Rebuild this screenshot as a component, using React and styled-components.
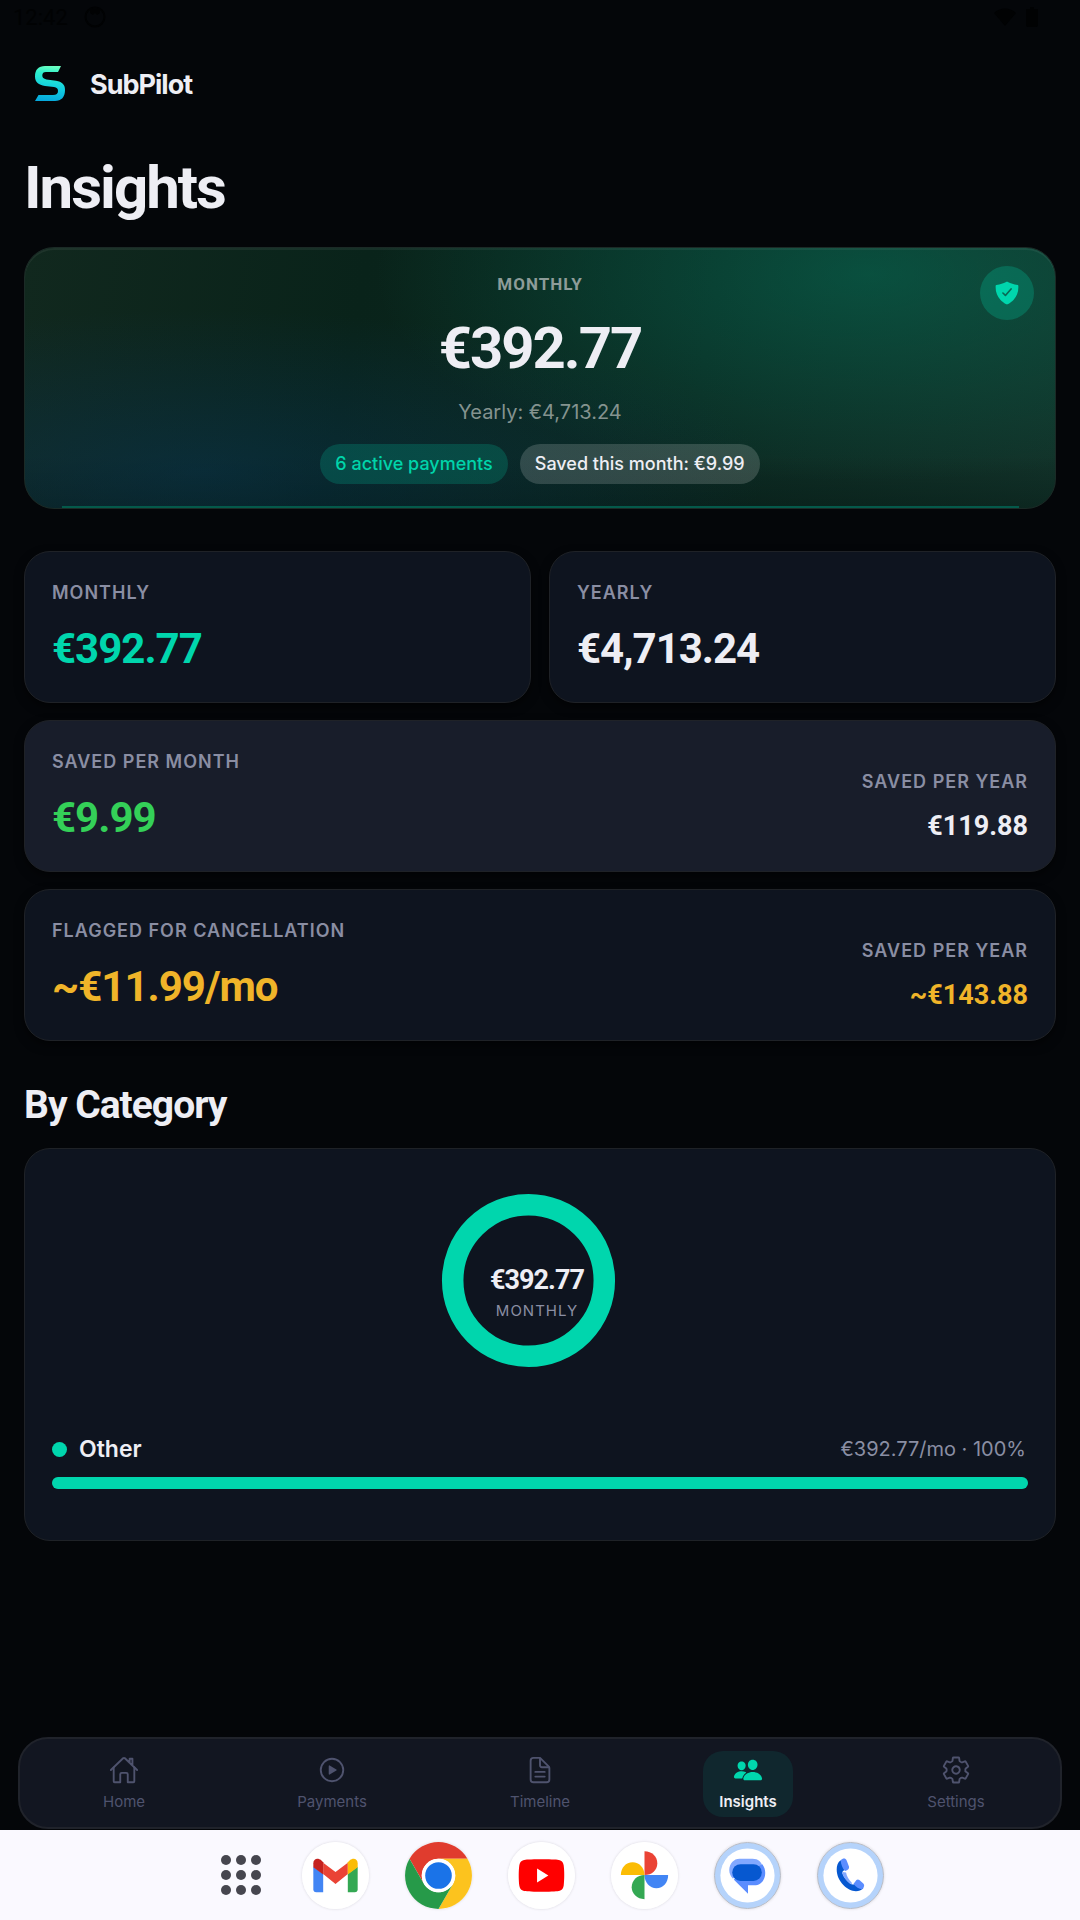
import React from 'react';
import styled, { createGlobalStyle } from 'styled-components';
import {
    IoHomeOutline,
    IoPlayCircleOutline,
    IoDocumentTextOutline,
    IoPeople,
    IoSettingsOutline,
    IoShieldCheckmark,
} from 'react-icons/io5';

const GlobalStyle = createGlobalStyle`
    * {
        box-sizing: border-box;
    }

    body {
        margin: 0;
        background: #040609;
        color: #eeeef4;
        font-family: Inter, sans-serif;
    }

    h1, h2, p {
        margin: 0;
    }

    button {
        border: none;
        padding: 0;
        background: none;
        font-family: inherit;
        cursor: pointer;
    }
`;

// Styled components
const Screen = styled.div`
    display: flex;
    flex-direction: column;
    min-height: 100vh;
`;

const StatusBar = styled.div`
    display: flex;
    align-items: center;
    justify-content: space-between;
    height: 34px;
    padding: 0 42px 0 13px;
    color: #010203;
    font-family: Roboto, sans-serif;
    font-size: 22px;
`;

const StatusGroup = styled.div`
    display: flex;
    align-items: center;
    gap: ${(props) => props.$gap}px;
`;

const Header = styled.header`
    display: flex;
    align-items: center;
    gap: 14px;
    height: 100px;
    padding: 0 24px;
`;

const Brand = styled.span`
    font-size: 27px;
    font-weight: 700;
    letter-spacing: -1px;
`;

const Content = styled.main`
    padding: 18px 24px 40px;
`;

const Title = styled.h1`
    margin-bottom: 23px;
    font-family: Roboto, sans-serif;
    font-size: 60px;
    font-weight: 700;
    line-height: 72px;
    letter-spacing: -2px;
`;

const Hero = styled.section`
    position: relative;
    display: flex;
    flex-direction: column;
    align-items: center;
    padding: 25px 24px 24px;
    border: 1px solid #1b2a26;
    border-radius: 30px;
    overflow: hidden;
    background:
        radial-gradient(ellipse 48% 80% at 82% 10%, rgba(0, 140, 108, 0.36), transparent),
        radial-gradient(ellipse 55% 62% at 17% 86%, rgba(8, 56, 96, 0.42), transparent),
        linear-gradient(180deg, transparent 80%, rgba(0, 12, 10, 0.3) 100%),
        linear-gradient(100deg, #11281e 0%, #09231a 32%, #0c2a22 65%, #12332a 100%);
    box-shadow: inset 0 2px 0 rgba(255, 255, 255, 0.06);
`;

const HeroLabel = styled.p`
    color: #8d9c99;
    font-family: Roboto, sans-serif;
    font-size: 17px;
    font-weight: 700;
    line-height: 22px;
    letter-spacing: 1px;
`;

const HeroValue = styled.p`
    margin-top: 21px;
    font-family: Roboto, sans-serif;
    font-size: 58px;
    font-weight: 700;
    line-height: 64px;
    letter-spacing: -2px;
`;

const HeroNote = styled.p`
    margin-top: 19px;
    color: #84938f;
    font-size: 20px;
    line-height: 26px;
`;

const Pills = styled.div`
    display: flex;
    gap: 12px;
    margin-top: 19px;
`;

const Pill = styled.span`
    padding: 0 15px;
    border-radius: 20px;
    background: ${(props) => (props.$accent ? 'rgba(0, 212, 170, 0.2)' : 'rgba(255, 255, 255, 0.16)')};
    color: ${(props) => (props.$accent ? '#00d4aa' : '#eeeef4')};
    font-size: 18px;
    font-weight: 500;
    line-height: 40px;
`;

const Badge = styled.div`
    position: absolute;
    top: 18px;
    right: 21px;
    display: grid;
    place-items: center;
    width: 54px;
    height: 54px;
    border-radius: 50%;
    background: rgba(0, 212, 170, 0.24);
    color: #00d6ad;
`;

const HeroLine = styled.div`
    position: absolute;
    left: 37px;
    right: 36px;
    bottom: 0;
    height: 2px;
    background: #045a4b;
`;

const Stats = styled.section`
    display: grid;
    grid-template-columns: 1fr 1fr;
    gap: 17px 18px;
    margin-top: 42px;
`;

const Card = styled.div`
    display: flex;
    align-items: flex-end;
    justify-content: space-between;
    grid-column: ${(props) => (props.$wide ? '1 / -1' : 'auto')};
    padding: 28px 27px;
    border: 1px solid #1f2227;
    border-radius: 26px;
    background: ${(props) => (props.$raised ? '#181d2a' : '#0e141f')};
    box-shadow: 0 4px 10px rgba(0, 0, 0, 0.5);
`;

const Side = styled.div`
    text-align: right;
`;

const Label = styled.p`
    color: #8a8ea3;
    font-size: 18px;
    font-weight: 600;
    line-height: 26px;
    letter-spacing: 1px;
`;

const Value = styled.p`
    margin-top: 17px;
    color: ${(props) => props.$color || '#eeeef4'};
    font-family: Roboto, sans-serif;
    font-size: 42px;
    font-weight: 700;
    line-height: 51px;
    letter-spacing: -1px;
`;

const SideValue = styled.p`
    margin-top: 14px;
    color: ${(props) => props.$color || '#eeeef4'};
    font-family: Roboto, sans-serif;
    font-size: 27px;
    font-weight: 700;
    line-height: 34px;
`;

const Subtitle = styled.h2`
    margin: 40px 0 19px;
    font-family: Roboto, sans-serif;
    font-size: 39px;
    font-weight: 700;
    line-height: 48px;
    letter-spacing: -1px;
`;

const CategoryCard = styled.section`
    padding: 28px 27px;
    border: 1px solid #1f2227;
    border-radius: 26px;
    background: #0e141f;
`;

const Chart = styled.div`
    position: relative;
    width: 208px;
    height: 208px;
    margin: 0 auto 50px;
`;

const ChartText = styled.div`
    position: absolute;
    inset: 0;
    display: flex;
    flex-direction: column;
    align-items: center;
    justify-content: center;
    padding: 26px 6px 0 0;
`;

const ChartValue = styled.span`
    font-family: Roboto, sans-serif;
    font-size: 27px;
    font-weight: 700;
    line-height: 34px;
    letter-spacing: -1px;
`;

const ChartLabel = styled.span`
    color: #8a8ea3;
    font-size: 15px;
    line-height: 28px;
    letter-spacing: 1px;
`;

const CategoryRow = styled.div`
    display: flex;
    align-items: center;
    gap: 12px;
    margin-bottom: 14px;
    line-height: 28px;
`;

const Dot = styled.span`
    width: 15px;
    height: 15px;
    border-radius: 50%;
    background: #00d6ad;
`;

const CategoryName = styled.span`
    font-size: 23px;
    font-weight: 600;
`;

const CategoryAmount = styled.span`
    margin-left: auto;
    padding-right: 2px;
    color: #8a8ea3;
    font-size: 20px;
`;

const Track = styled.div`
    height: 12px;
    margin-bottom: 23px;
    border-radius: 6px;
    background: #1b2230;
`;

const Fill = styled.div`
    height: 100%;
    border-radius: 6px;
    background: #00d6ad;
`;

const TabBar = styled.nav`
    display: grid;
    grid-template-columns: repeat(5, 1fr);
    justify-items: center;
    margin: auto 18px 1px;
    padding: 12px 0 10px;
    border: 2px solid #20232b;
    border-radius: 30px;
    background: #121621;
`;

const Tab = styled.button`
    display: flex;
    flex-direction: column;
    align-items: center;
    gap: 5px;
    height: 66px;
    padding: 4px 16px 0;
    border-radius: 20px;
    background: ${(props) => (props.$active ? '#10272e' : 'transparent')};
    color: ${(props) => (props.$active ? '#00d6ad' : '#4f536e')};

    span {
        color: ${(props) => (props.$active ? '#eeeef4' : 'inherit')};
        font-size: 15px;
        font-weight: ${(props) => (props.$active ? 600 : 400)};
        line-height: 24px;
    }
`;

const Dock = styled.footer`
    display: flex;
    align-items: center;
    justify-content: center;
    gap: 36px;
    height: 90px;
    padding-left: 19px;
    background: #faf9ff;
`;

const DockButton = styled.button`
    display: flex;
    border-radius: 50%;
    box-shadow: ${(props) => (props.$plain ? 'none' : '0 0 3px rgba(0, 0, 0, 0.14)')};
`;

const tabs = [
    { name: 'Home', icon: IoHomeOutline },
    { name: 'Payments', icon: IoPlayCircleOutline },
    { name: 'Timeline', icon: IoDocumentTextOutline },
    { name: 'Insights', icon: IoPeople },
    { name: 'Settings', icon: IoSettingsOutline },
];

const categories = [{ name: 'Other', amount: '€392.77/mo', percent: 100 }];

function Logo() {
    return (
        <svg width="52" height="48" viewBox="0 0 52 48" aria-hidden="true">
            <defs>
                <linearGradient id="logo" x1="0.5" y1="0" x2="0.4" y2="1">
                    <stop offset="0" stopColor="#6dffc0" />
                    <stop offset="0.2" stopColor="#2ff0cc" />
                    <stop offset="0.6" stopColor="#12cfe0" />
                    <stop offset="1" stopColor="#06a8dc" />
                </linearGradient>
            </defs>
            <path
                fill="url(#logo)"
                d="M37 6 L34 12 H22 C19.500 12 18.300 13.200 18.300 15.300 C18.300 17.800 19.500 18.900 22.500 19.400 L32 20.800 C38 21.800 41 24.500 41 30 C41 37 37.500 41 31 41 H11 L14.500 35 H29 C32.500 35 34 33.500 34 31 C34 28.500 32.700 27.500 30 27.100 L21 25.900 C14.500 25 11 22 11 16.500 C11 9.500 14.500 6 21 6 Z"
            />
        </svg>
    );
}

function GridIcon() {
    const steps = [10, 25, 40];
    return (
        <svg width="50" height="50" viewBox="0 0 50 50">
            {steps.map((y) => steps.map((x) => <circle key={`${x}-${y}`} cx={x} cy={y} r="5" fill="#46464f" />))}
        </svg>
    );
}

function GmailIcon() {
    return (
        <svg width="67" height="67" viewBox="0 0 68 68">
            <circle cx="34" cy="34" r="34" fill="#fff" />
            <path d="M11.500 25 L21.500 32.500 V51 H14.500 C12.500 51 11.500 50 11.500 48 Z" fill="#4285f4" />
            <path d="M46.500 32.500 L56.500 25 V48 C56.500 50 55.500 51 53.500 51 H46.500 Z" fill="#34a853" />
            <path d="M21.500 21 L34 30.500 L46.500 21 V32.500 L34 42.500 L21.500 32.500 Z" fill="#ea4335" />
            <path d="M11.500 25.500 V21.500 C11.500 17 16 15.500 19.500 18.500 L21.500 20.500 V33 L11.500 25.500 Z" fill="#c5221f" />
            <path d="M56.500 25.500 V21.500 C56.500 17 52 15.500 48.500 18.500 L46.500 20.500 V33 L56.500 25.500 Z" fill="#fbbc04" />
        </svg>
    );
}

function ChromeIcon() {
    return (
        <svg width="67" height="67" viewBox="0 0 68 68">
            <circle cx="34" cy="34" r="34" fill="#fff" />
            <path d="M4.600 17 A34 34 0 0 1 63.400 17 H34 A17 17 0 0 0 19.300 42.500 Z" fill="#e03c2e" />
            <path d="M63.400 17 A34 34 0 0 1 34 68 L48.700 42.500 A17 17 0 0 0 34 17 Z" fill="#fcc31e" />
            <path d="M34 68 A34 34 0 0 1 4.600 17 L19.300 42.500 A17 17 0 0 0 48.700 42.500 Z" fill="#269a49" />
            <circle cx="34" cy="34" r="17" fill="#fff" />
            <circle cx="34" cy="34" r="13.500" fill="#1a73e8" />
        </svg>
    );
}

function YoutubeIcon() {
    return (
        <svg width="67" height="67" viewBox="0 0 68 68">
            <circle cx="34" cy="34" r="34" fill="#fff" />
            <path
                d="M34 17.500 C46 17.500 50 17.800 52.500 18.500 C55 19.200 56 20.800 56.500 23.500 C57.300 29 57.300 38 56.500 44.500 C56 47.200 55 48.800 52.500 49.500 C50 50.200 46 50.500 34 50.500 C22 50.500 18 50.200 15.500 49.500 C13 48.800 12 47.200 11.500 44.500 C10.700 38 10.700 29 11.500 23.500 C12 20.800 13 19.200 15.500 18.500 C18 17.800 22 17.500 34 17.500 Z"
                fill="#f00"
            />
            <path d="M29.500 27 L41 34 L29.500 41 Z" fill="#fff" />
        </svg>
    );
}

function PhotosIcon() {
    return (
        <svg width="67" height="67" viewBox="0 0 68 68">
            <circle cx="34" cy="34" r="34" fill="#fff" />
            <path d="M34 9.500 C41.500 9.500 47 15 47 21.500 C47 28.500 41.500 33.500 34 33.500 Z" fill="#ea4335" />
            <path d="M34 33.500 H58 C58 41 53 47 46 47 C39.500 47 34 41 34 33.500 Z" fill="#4285f4" />
            <path d="M34 33.500 V58 C26.500 58 21 52.500 21 46 C21 39 26.500 33.500 34 33.500 Z" fill="#34a853" />
            <path d="M34 33.500 H10 C10 26 15 20.500 22 20.500 C28.500 20.500 34 26 34 33.500 Z" fill="#fbbc04" />
        </svg>
    );
}

function MessagesIcon() {
    return (
        <svg width="67" height="67" viewBox="0 0 68 68">
            <circle cx="34" cy="34" r="33.500" fill="#b5d3fb" stroke="#b9bcc4" />
            <circle cx="34" cy="34" r="27.500" fill="#fff" />
            <path d="M26 17 H39 C45 17 48.500 20.500 49 25 L19 37 C16.500 34.500 15.500 31.500 15.500 28.500 C15.500 22 20 17 26 17 Z" fill="#82a8ff" />
            <path d="M49 22.500 C51 25 52 28 52 31.500 C52 39 47 44 41 44 H34.500 V52.500 L20 38 Z" fill="#5b8dff" />
            <rect x="18.500" y="22.500" width="30" height="17" rx="8.500" fill="#0658d0" />
        </svg>
    );
}

function PhoneIcon() {
    return (
        <svg width="67" height="67" viewBox="0 0 68 68">
            <circle cx="34" cy="34" r="33.500" fill="#b5d3fb" stroke="#b9bcc4" />
            <circle cx="34" cy="34" r="27.500" fill="#fff" />
            <path d="M24 18.500 C21 20.500 20 24 20 28 C20 40 31 50 39.500 50 C42.500 50 45 49 47 47 L40 41 C37.500 43.500 36 43.500 33.500 42 C29.500 39 27 35.500 25.800 32 C25.500 30.500 26 29.500 28 28.500 Z" fill="#0658d0" />
            <path d="M25.500 30.500 L29.500 31 C30 35 32.500 38.500 35.500 41.500 L35 43 C30 40 26.500 36 25.500 30.500 Z" fill="#82a8ff" />
            <path d="M24 18.500 C26.500 16 29 16.500 30 18.500 L32.500 25 C33 27 31.500 28 28.500 29.500 C26 27 24.500 23.500 24 18.500 Z" fill="#5b8dff" />
            <path d="M37 42.500 L40 38.500 C41 37.800 42 37.800 43 38.500 L47 42 C48.500 43.500 48 45.500 46 48 C42.500 47.500 39.500 45.500 37 42.500 Z" fill="#5b8dff" />
        </svg>
    );
}

const dockApps = [
    { name: 'Gmail', icon: GmailIcon },
    { name: 'Chrome', icon: ChromeIcon },
    { name: 'YouTube', icon: YoutubeIcon },
    { name: 'Photos', icon: PhotosIcon },
    { name: 'Messages', icon: MessagesIcon },
    { name: 'Phone', icon: PhoneIcon },
];

function DonutChart() {
    return (
        <Chart>
            <svg width="208" height="208" viewBox="0 0 208 208" aria-hidden="true">
                <circle cx="92.500" cy="103.500" r="75.800" fill="none" stroke="#00d6ad" strokeWidth="21.500" />
            </svg>
            <ChartText>
                <ChartValue>€392.77</ChartValue>
                <ChartLabel>MONTHLY</ChartLabel>
            </ChartText>
        </Chart>
    );
}

function App() {
    return (
        <Screen>
            <GlobalStyle />
            <StatusBar>
                <StatusGroup $gap={16}>
                    <span>12:42</span>
                    <svg width="22" height="22" viewBox="0 0 22 22">
                        <circle cx="11" cy="11" r="9.500" fill="none" stroke="currentColor" strokeWidth="2" />
                        <path d="M6 3 H16 V7 L13 9 L11 7 L9 9 L6 7 Z" fill="currentColor" />
                    </svg>
                </StatusGroup>
                <StatusGroup $gap={10}>
                    <svg width="22" height="18" viewBox="0 0 22 18">
                        <path d="M0 5 C6 -1 16 -1 22 5 L11 18 Z" fill="currentColor" />
                    </svg>
                    <svg width="12" height="20" viewBox="0 0 12 20">
                        <path d="M4 0 H8 V2 H12 V18 Q12 20 10 20 H2 Q0 20 0 18 V2 H4 Z" fill="currentColor" />
                    </svg>
                </StatusGroup>
            </StatusBar>

            <Header>
                <Logo />
                <Brand>SubPilot</Brand>
            </Header>

            <Content>
                <Title>Insights</Title>

                <Hero>
                    <HeroLabel>MONTHLY</HeroLabel>
                    <HeroValue>€392.77</HeroValue>
                    <HeroNote>Yearly: €4,713.24</HeroNote>
                    <Pills>
                        <Pill $accent>6 active payments</Pill>
                        <Pill>Saved this month: €9.99</Pill>
                    </Pills>
                    <Badge>
                        <IoShieldCheckmark size={26} />
                    </Badge>
                    <HeroLine />
                </Hero>

                <Stats>
                    <Card>
                        <div>
                            <Label>MONTHLY</Label>
                            <Value $color="#00d6ad">€392.77</Value>
                        </div>
                    </Card>
                    <Card>
                        <div>
                            <Label>YEARLY</Label>
                            <Value>€4,713.24</Value>
                        </div>
                    </Card>
                    <Card $wide $raised>
                        <div>
                            <Label>SAVED PER MONTH</Label>
                            <Value $color="#34d058">€9.99</Value>
                        </div>
                        <Side>
                            <Label>SAVED PER YEAR</Label>
                            <SideValue>€119.88</SideValue>
                        </Side>
                    </Card>
                    <Card $wide>
                        <div>
                            <Label>FLAGGED FOR CANCELLATION</Label>
                            <Value $color="#f0b429">~€11.99/mo</Value>
                        </div>
                        <Side>
                            <Label>SAVED PER YEAR</Label>
                            <SideValue $color="#f0b429">~€143.88</SideValue>
                        </Side>
                    </Card>
                </Stats>

                <Subtitle>By Category</Subtitle>
                <CategoryCard>
                    <DonutChart />
                    {categories.map((category) => (
                        <div key={category.name}>
                            <CategoryRow>
                                <Dot />
                                <CategoryName>{category.name}</CategoryName>
                                <CategoryAmount>
                                    {category.amount} · {category.percent}%
                                </CategoryAmount>
                            </CategoryRow>
                            <Track>
                                <Fill style={{ width: `${category.percent}%` }} />
                            </Track>
                        </div>
                    ))}
                </CategoryCard>
            </Content>

            <TabBar>
                {tabs.map(({ name, icon: Icon }) => (
                    <Tab key={name} type="button" $active={name === 'Insights'}>
                        <Icon size={30} />
                        <span>{name}</span>
                    </Tab>
                ))}
            </TabBar>

            <Dock>
                <DockButton type="button" aria-label="All apps" $plain>
                    <GridIcon />
                </DockButton>
                {dockApps.map(({ name, icon: Icon }) => (
                    <DockButton key={name} type="button" aria-label={name}>
                        <Icon />
                    </DockButton>
                ))}
            </Dock>
        </Screen>
    );
}

export default App;
